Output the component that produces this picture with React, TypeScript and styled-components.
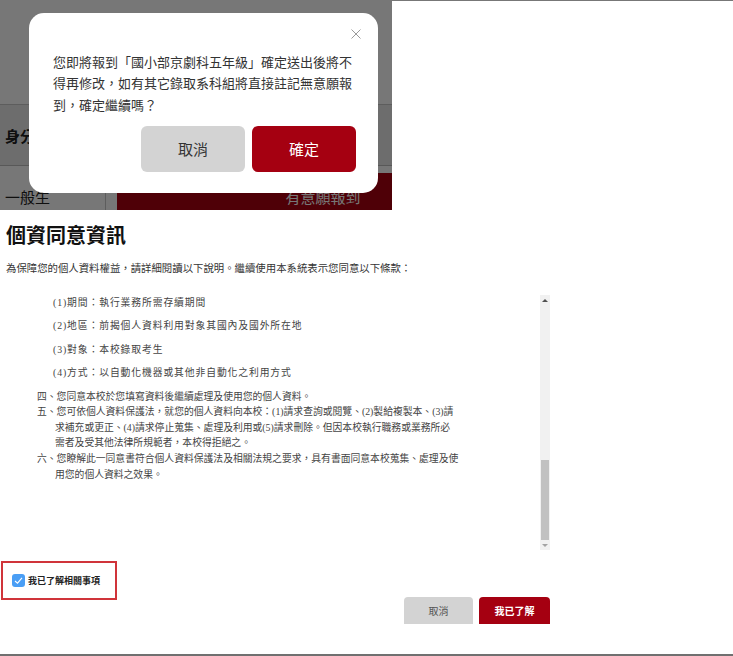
import React from "react";
import styled, { createGlobalStyle } from "styled-components";

const GlobalStyle = createGlobalStyle`
  html, body { margin: 0; padding: 0; background: #fff; }
  body { font-family: "Noto Sans CJK TC", "Noto Sans", sans-serif; }
  * { box-sizing: border-box; }
`;

const Page = styled.div`
  width: 733px;
  height: 656px;
  border-top: 1px solid #777;
  border-bottom: 2px solid #707070;
  display: flex;
  flex-direction: column;
  overflow: hidden;
  background: #fff;
`;

/* ---------- snapshot of the confirm dialog ---------- */
const Snapshot = styled.div`
  position: relative;
  width: 392px;
  height: 209px;
  flex: none;
  overflow: hidden;
  background: #fff;
`;

const BgTop = styled.div`
  height: 103px;
`;

const BgHeaderRow = styled.div`
  height: 62px;
  display: flex;
  align-items: center;
  padding-left: 5px;
  background: #e9e9e9;
  border-top: 1px solid #c8c8c8;
  border-bottom: 1px solid #bdbdbd;
  font-size: 15px;
  font-weight: 700;
  color: #222;
`;

const BgBodyRow = styled.div`
  display: flex;
  height: 60px;
`;

const BgCell = styled.div<{ $w?: number }>`
  flex: ${(p) => (p.$w ? "none" : "1")};
  width: ${(p) => (p.$w ? `${p.$w}px` : "auto")};
  border-right: ${(p) => (p.$w ? "1px solid #c8c8c8" : "none")};
  padding: ${(p) => (p.$w ? "21px 0 0 5px" : "7px 0 0 11px")};
  font-size: 15px;
  line-height: 20px;
  color: #222;
`;

const BgButton = styled.div`
  width: 412px;
  height: 48px;
  background: #a9000f;
  color: #fff;
  font-size: 15px;
  line-height: 48px;
  text-align: center;
`;

const Overlay = styled.div`
  position: absolute;
  inset: 0;
  background: rgba(0, 0, 0, 0.535);
`;

const Modal = styled.div`
  position: absolute;
  left: 29px;
  top: 12px;
  width: 349px;
  height: 180px;
  background: #fff;
  border-radius: 15px;
  padding: 0 22px 0 24px;
  display: flex;
  flex-direction: column;
`;

const CloseRow = styled.div`
  height: 38px;
  display: flex;
  justify-content: flex-end;
  align-items: flex-start;
  padding-top: 16px;
`;

const CloseButton = styled.button`
  width: 10px;
  height: 10px;
  margin-right: -5px;
  padding: 0;
  border: 0;
  background: none;
  display: flex;
  svg { display: block; }
`;

const Message = styled.p`
  margin: 0;
  font-size: 13px;
  line-height: 21.3px;
  color: #333;
`;

const ModalActions = styled.div`
  margin-top: 11px;
  display: flex;
  justify-content: flex-end;
  gap: 7px;
`;

const ModalButton = styled.button<{ $primary?: boolean }>`
  width: 104px;
  height: 46px;
  border: 0;
  border-radius: 6px;
  font-family: inherit;
  font-size: 15px;
  background: ${(p) => (p.$primary ? "#a50011" : "#d3d3d3")};
  color: ${(p) => (p.$primary ? "#fff" : "#333")};
`;

/* ---------- consent section ---------- */
const Consent = styled.section`
  padding: 13px 0 0 6px;
  display: flex;
  flex-direction: column;
`;

const Title = styled.h2`
  margin: 0;
  font-size: 20px;
  line-height: 24px;
  font-weight: 700;
  color: #111;
`;

const Lead = styled.p`
  margin: 14px 0 0;
  font-size: 10.4px;
  line-height: 14px;
  color: #333;
  white-space: nowrap;
`;

const ScrollBox = styled.div`
  margin-top: 20px;
  width: 544px;
  height: 255px;
  display: flex;
`;

const ScrollContent = styled.div`
  flex: 1;
  overflow: hidden;
  padding-left: 31px;
  font-family: "Liberation Serif", "Noto Sans CJK TC", serif;
  font-size: 9.8px;
  line-height: 15.6px;
  color: #444;
`;

const SubItem = styled.div`
  padding-left: 16px;
  margin-bottom: 7.8px;
  letter-spacing: 0.9px;
  white-space: nowrap;
`;

const ClauseLine = styled.div<{ $cont?: boolean }>`
  padding-left: ${(p) => (p.$cont ? "18px" : "0")};
  white-space: nowrap;
`;

const ScrollTrack = styled.div`
  width: 10px;
  flex: none;
  background: #f1f1f1;
  display: flex;
  flex-direction: column;
`;

const ScrollArrow = styled.div<{ $down?: boolean }>`
  height: 10px;
  display: flex;
  align-items: center;
  justify-content: center;
  &::before {
    content: "";
    border-left: 3px solid transparent;
    border-right: 3px solid transparent;
    ${(p) =>
      p.$down
        ? "border-top: 3px solid #a3a3a3;"
        : "border-bottom: 3px solid #505050;"}
  }
`;

const ScrollSpacer = styled.div`
  flex: 1;
`;

const ScrollThumb = styled.div`
  height: 80px;
  margin: 0 1px;
  background: #c1c1c1;
`;

const AgreeBox = styled.label`
  margin: 11px 0 0 -5px;
  width: 116px;
  height: 39px;
  border: 2px solid #d0343a;
  display: flex;
  align-items: center;
  gap: 3px;
  padding-left: 9px;
  font-size: 9px;
  font-weight: 700;
  color: #222;
`;

const CheckMark = styled.span`
  width: 13px;
  height: 13px;
  border-radius: 3px;
  background: #4a9ef5;
  display: flex;
  align-items: center;
  justify-content: center;
`;

const Actions = styled.div`
  margin-top: -3px;
  width: 544px;
  display: flex;
  justify-content: flex-end;
  gap: 6px;
`;

const ActionButton = styled.button<{ $primary?: boolean; $w: number }>`
  width: ${(p) => p.$w}px;
  height: 27px;
  border: 0;
  border-radius: 4px 4px 0 0;
  font-family: inherit;
  font-size: 10px;
  font-weight: ${(p) => (p.$primary ? 700 : 400)};
  background: ${(p) => (p.$primary ? "#a50011" : "#d3d3d3")};
  color: ${(p) => (p.$primary ? "#fff" : "#555")};
`;

export default function App() {
  return (
    <>
      <GlobalStyle />
      <Page>
        <Snapshot>
          <BgTop />
          <BgHeaderRow>身分</BgHeaderRow>
          <BgBodyRow>
            <BgCell $w={106}>一般生</BgCell>
            <BgCell>
              <BgButton>有意願報到</BgButton>
            </BgCell>
          </BgBodyRow>
          <Overlay />
          <Modal>
            <CloseRow>
              <CloseButton aria-label="close">
                <svg width="10" height="10" viewBox="0 0 10 10">
                  <path d="M0.5 0.5L9.5 9.5M9.5 0.5L0.5 9.5" stroke="#9a9a9a" strokeWidth="1" />
                </svg>
              </CloseButton>
            </CloseRow>
            <Message>
              您即將報到「國小部京劇科五年級」確定送出後將不得再修改，如有其它錄取系科組將直接註記無意願報到，確定繼續嗎？
            </Message>
            <ModalActions>
              <ModalButton>取消</ModalButton>
              <ModalButton $primary>確定</ModalButton>
            </ModalActions>
          </Modal>
        </Snapshot>

        <Consent>
          <Title>個資同意資訊</Title>
          <Lead>為保障您的個人資料權益，請詳細閱讀以下說明。繼續使用本系統表示您同意以下條款：</Lead>
          <ScrollBox>
            <ScrollContent>
              <SubItem>(1)期間：執行業務所需存續期間</SubItem>
              <SubItem>(2)地區：前揭個人資料利用對象其國內及國外所在地</SubItem>
              <SubItem>(3)對象：本校錄取考生</SubItem>
              <SubItem>(4)方式：以自動化機器或其他非自動化之利用方式</SubItem>
              <ClauseLine>四、您同意本校於您填寫資料後繼續處理及使用您的個人資料。</ClauseLine>
              <ClauseLine>五、您可依個人資料保護法，就您的個人資料向本校：(1)請求查詢或閱覽、(2)製給複製本、(3)請</ClauseLine>
              <ClauseLine $cont>求補充或更正、(4)請求停止蒐集、處理及利用或(5)請求刪除。但因本校執行職務或業務所必</ClauseLine>
              <ClauseLine $cont>需者及受其他法律所規範者，本校得拒絕之。</ClauseLine>
              <ClauseLine>六、您瞭解此一同意書符合個人資料保護法及相關法規之要求，具有書面同意本校蒐集、處理及使</ClauseLine>
              <ClauseLine $cont>用您的個人資料之效果。</ClauseLine>
            </ScrollContent>
            <ScrollTrack>
              <ScrollArrow />
              <ScrollSpacer />
              <ScrollThumb />
              <ScrollArrow $down />
            </ScrollTrack>
          </ScrollBox>
          <AgreeBox>
            <CheckMark>
              <svg width="9" height="9" viewBox="0 0 9 9">
                <path d="M1 5L3.5 7.2L8 1.8" fill="none" stroke="#fff" strokeWidth="1.1" />
              </svg>
            </CheckMark>
            我已了解相關事項
          </AgreeBox>
          <Actions>
            <ActionButton $w={69}>取消</ActionButton>
            <ActionButton $w={71} $primary>我已了解</ActionButton>
          </Actions>
        </Consent>
      </Page>
    </>
  );
}
